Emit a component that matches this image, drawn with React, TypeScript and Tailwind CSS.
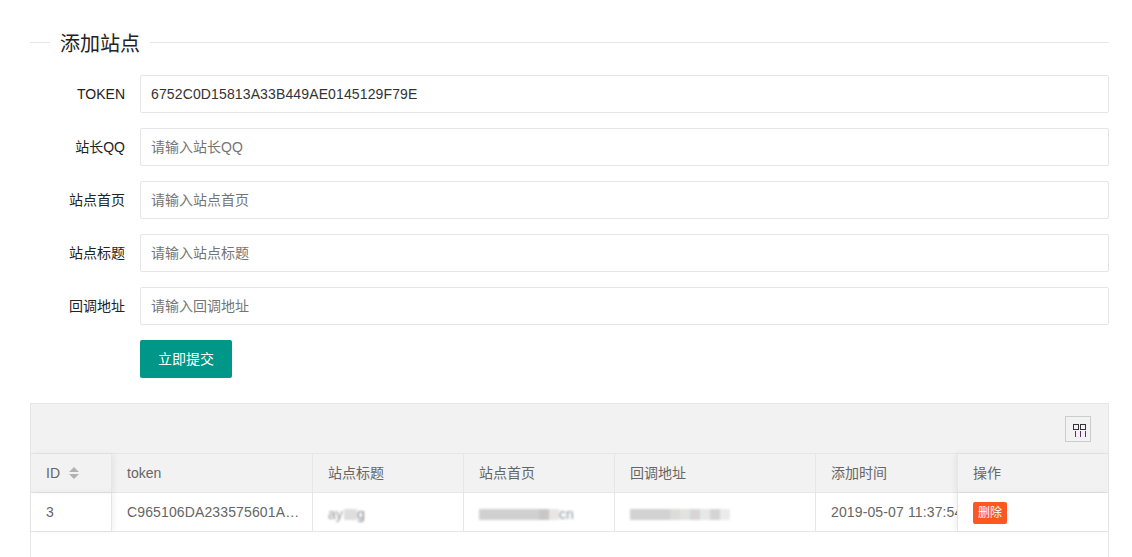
import React from "react";

const fields = [
  { label: "TOKEN", value: "6752C0D15813A33B449AE0145129F79E", placeholder: "" },
  { label: "站长QQ", value: "", placeholder: "请输入站长QQ" },
  { label: "站点首页", value: "", placeholder: "请输入站点首页" },
  { label: "站点标题", value: "", placeholder: "请输入站点标题" },
  { label: "回调地址", value: "", placeholder: "请输入回调地址" },
];

const font = "font-['Liberation_Sans','Noto_Sans_CJK_SC',sans-serif]";

const App: React.FC = () => {
  return (
    <div className={`h-[557px] overflow-hidden bg-white pl-[30px] pr-[23px] pt-[31px] text-[14px] text-[#666] ${font}`}>
      {/* 标题 */}
      <div className="flex h-[23px] items-center">
        <div className="h-px w-[20px] bg-[#e6e6e6]" />
        <h2 className="h-[23px] px-[10px] text-[20px] font-normal leading-[26px] text-[#222]">添加站点</h2>
        <div className="h-px flex-1 bg-[#e6e6e6]" />
      </div>

      {/* 表单 */}
      <form className="mt-[21px] flex flex-col gap-[15px]">
        {fields.map((f) => (
          <div key={f.label} className="flex h-[38px] items-center">
            <label className="w-[95px] text-right text-[#222]">{f.label}</label>
            <input
              readOnly
              value={f.value}
              placeholder={f.placeholder}
              className="ml-[15px] h-[38px] flex-1 rounded-[2px] border border-[#e6e6e6] px-[10px] text-[14px] tracking-[0.13px] text-[#333] outline-none placeholder:tracking-normal placeholder:text-[#757575]"
            />
          </div>
        ))}
        <div className="pl-[110px]">
          <button
            type="button"
            className="h-[38px] w-[92px] rounded-[2px] bg-[#009688] text-[14px] text-white"
          >
            立即提交
          </button>
        </div>
      </form>

      {/* 表格 */}
      <div className="mt-[25px] h-[200px] border border-b-0 border-[#e6e6e6]">
        <div className="flex h-[49px] items-center justify-end bg-[#f2f2f2] pr-[17px]">
          <button type="button" className="flex h-[26px] w-[26px] items-center justify-center border border-[#ccc]">
            <svg width="16" height="16" viewBox="0 0 16 16" fill="none" stroke="#333" strokeWidth="1">
              <rect x="3.5" y="3.5" width="5" height="5" />
              <rect x="10.5" y="3.5" width="5" height="5" />
              <path d="M5.5 10v6M10.5 10v6M15.5 10v6" stroke="#5f2c6b" />
            </svg>
          </button>
        </div>

        <div className="flex h-[40px] border-y border-[#e6e6e6] bg-[#f2f2f2]">
          <div className="z-10 flex w-[81px] items-center gap-[9px] border-r border-[#e6e6e6] pl-[15px] shadow-[2px_0_6px_rgba(0,0,0,0.06)]">
            ID
            <svg width="10" height="12" viewBox="0 0 10 12" fill="#b2b2b2">
              <path d="M5 0l5 5H0zM5 12L0 7h10z" />
            </svg>
          </div>
          <div className="flex w-[201px] items-center border-r border-[#e6e6e6] pl-[15px]">token</div>
          <div className="flex w-[151px] items-center border-r border-[#e6e6e6] pl-[15px]">站点标题</div>
          <div className="flex w-[151px] items-center border-r border-[#e6e6e6] pl-[15px]">站点首页</div>
          <div className="flex w-[201px] items-center border-r border-[#e6e6e6] pl-[15px]">回调地址</div>
          <div className="flex w-[141px] items-center pl-[15px]">添加时间</div>
          <div className="z-10 flex flex-1 items-center border-l border-[#e6e6e6] pl-[15px] shadow-[-2px_0_6px_rgba(0,0,0,0.06)]">操作</div>
        </div>

        <div className="flex h-[39px] border-b border-[#e6e6e6]">
          <div className="z-10 flex w-[81px] items-center border-r border-[#e6e6e6] pl-[15px] shadow-[2px_0_6px_rgba(0,0,0,0.06)]">3</div>
          <div className="flex w-[201px] items-center border-r border-[#e6e6e6] pl-[15px] tracking-[0.13px]">C965106DA233575601A…</div>
          {/* 打码的内容 */}
          <div className="flex w-[151px] items-center border-r border-[#e6e6e6] pl-[15px]">
            <div className="mt-[5px] flex h-[11px] items-center blur-[1px]">
              <span className="w-[16px] text-[#999]">ay</span>
              <div className="h-full w-[13px] bg-[#dedede]" />
              <span className="text-[#7f858c]">g</span>
            </div>
          </div>
          <div className="flex w-[151px] items-center border-r border-[#e6e6e6] pl-[15px]">
            <div className="mt-[5px] flex h-[11px] items-center blur-[1px]">
              <div className="h-full w-[60px] bg-[#d0d0d0]" />
              <div className="h-full w-[10px] bg-[#c9c7c5]" />
              <div className="h-full w-[10px] bg-[#e8e6e2]" />
              <span className="text-[#8a95a0]">cn</span>
            </div>
          </div>
          <div className="flex w-[201px] items-center border-r border-[#e6e6e6] pl-[15px]">
            <div className="mt-[5px] flex h-[11px] items-center blur-[1px]">
              <div className="h-full w-[40px] bg-[#d2d2d2]" />
              <div className="h-full w-[10px] bg-[#dedbd8]" />
              <div className="h-full w-[10px] bg-[#e2e2e2]" />
              <div className="h-full w-[10px] bg-[#d8d6d4]" />
              <div className="h-full w-[10px] bg-[#e5e7eb]" />
              <div className="h-full w-[10px] bg-[#d4d4d4]" />
              <div className="h-full w-[10px] bg-[#ebebeb]" />
            </div>
          </div>
          <div className="flex w-[141px] items-center overflow-hidden whitespace-nowrap pl-[15px] tracking-[0.13px]">2019-05-07 11:37:54</div>
          <div className="z-10 flex flex-1 items-center border-l border-[#e6e6e6] bg-white pl-[15px] shadow-[-2px_0_6px_rgba(0,0,0,0.06)]">
            <span className="mt-[1px] flex h-[22px] w-[34px] items-center justify-center rounded-[2px] bg-[#ff5722] text-[12px] text-white">删除</span>
          </div>
        </div>
      </div>
    </div>
  );
};

export default App;
